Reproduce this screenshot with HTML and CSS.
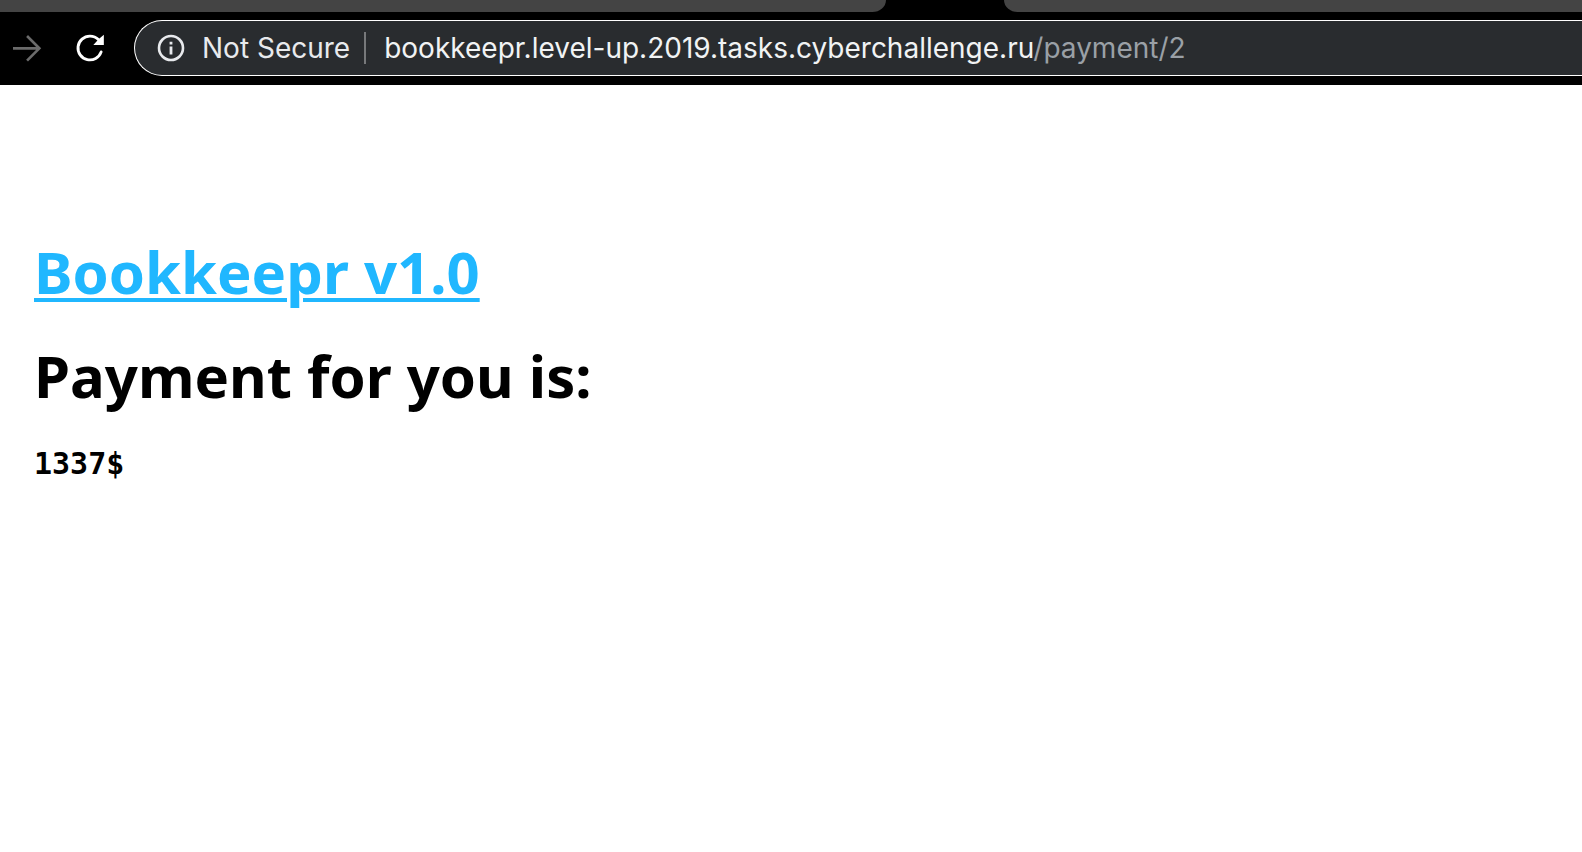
FILE: index.html
```html
<!DOCTYPE html>
<html lang="en">
<head>
<meta charset="utf-8">
<title>Bookkeepr v1.0</title>
<link rel="stylesheet" href="styles.css">
</head>
<body>
<header class="browser">
  <div class="tabs">
    <div class="tab tab-before"></div>
    <div class="tab tab-after"></div>
  </div>
  <div class="toolbar">
    <button class="nav-button forward" type="button" aria-label="Forward">
      <svg viewBox="0 0 24 24"><path d="M5 12.2h14.6M13.2 5.4l6.8 6.8-6.8 6.8" fill="none" stroke="currentColor" stroke-width="1.6" stroke-linecap="square"/></svg>
    </button>
    <button class="nav-button" type="button" aria-label="Reload">
      <svg viewBox="0 0 24 24"><path fill="currentColor" d="M17.65 6.35A7.96 7.96 0 0 0 12 4a8 8 0 1 0 7.5 10.6 .8.8 0 0 0-1.6-.5A6.3 6.3 0 1 1 12 5.7c1.75 0 3.3.73 4.45 1.87L14 10.2h6.3V4z"/></svg>
    </button>
    <div class="address">
      <button class="security" type="button">
        <svg class="info" viewBox="0 0 32 32"><circle cx="16" cy="16" r="12" fill="none" stroke="currentColor" stroke-width="2.6"/><path d="M14.6 9.7h2.8v2.8h-2.8zM14.6 14.6h2.8v7.8h-2.8z" fill="currentColor"/></svg>
        <span>Not Secure</span>
      </button>
      <div class="url">bookkeepr.level-up.2019.tasks.cyberchallenge.ru<span class="path">/payment/2</span></div>
    </div>
  </div>
</header>
<main class="page">
  <h1><a href="#">Bookkeepr v1.0</a></h1>
  <h1>Payment for you is:</h1>
  <p class="amount">1337$</p>
</main>
</body>
</html>
```
FILE: styles.css
```css
* {
  box-sizing: border-box;
}

body {
  margin: 0;
  background: #fff;
  color: #000;
  font-family: "Noto Sans", "Open Sans", sans-serif;
}

.browser {
  background: #000;
  overflow: hidden;
  font-family: Inter, Roboto, sans-serif;
}

.tabs {
  display: flex;
  gap: 118px;
  height: 12px;
}

.tab {
  background: #444;
}

.tab-before {
  flex: 886 1 0;
  border-bottom-right-radius: 16px 14px;
}

.tab-after {
  flex: 578 1 0;
  border-bottom-left-radius: 16px 14px;
}

.toolbar {
  display: flex;
  align-items: center;
  gap: 24px;
  padding: 8px 0 9px 6px;
}

button {
  display: flex;
  align-items: center;
  padding: 0;
  border: 0;
  background: none;
  color: inherit;
  font: inherit;
}

.nav-button {
  flex: none;
  color: #fff;
}

.nav-button svg {
  display: block;
  width: 40px;
  height: 40px;
}

.forward {
  color: #6b6b6b;
}

.address {
  flex: 1;
  display: flex;
  align-items: center;
  height: 56px;
  padding-left: 20px;
  border: 1px solid #fff;
  border-right: 0;
  border-radius: 28px 0 0 28px;
  background: #292c2f;
  color: #f1f3f4;
  font-size: 28px;
  line-height: 32px;
  white-space: nowrap;
}

.security {
  gap: 15px;
  padding-right: 14px;
  border-right: 2px solid #77797b;
  color: #e8eaed;
}

.info {
  width: 32px;
  height: 32px;
}

.url {
  padding-left: 18px;
}

.path {
  color: #9aa0a6;
}

.page {
  padding: 147px 34px;
}

h1 {
  margin: 0 0 24px;
  font-size: 58px;
  line-height: 80px;
}

h1 a {
  color: #20b7ff;
  text-decoration-thickness: 4px;
  text-underline-offset: 4px;
}

.amount {
  margin: 0;
  font-family: "DejaVu Sans Mono", monospace;
  font-size: 30px;
  font-weight: 700;
  line-height: 48px;
}
```
